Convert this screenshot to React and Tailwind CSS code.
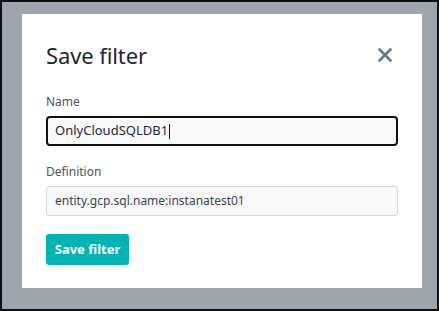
import React from "react";

export default function App() {
  return (
    <div
      className="w-[439px] h-[311px] bg-[#0f0f0f] p-[2px]"
      style={{ fontFamily: '"Noto Sans", "Open Sans", sans-serif' }}
    >
      <div className="w-full h-full bg-[#9ea5ad] pt-[12px] pl-[20px]">
        <div className="w-[400px] h-[274px] bg-white pt-[29px] px-[24px]">
          {/* Header */}
          <div className="flex items-center justify-between h-[24px]">
            <h2 className="text-[22px] leading-none text-[#1c2536] tracking-[-0.1px]">
              Save filter
            </h2>
            <button className="mr-[6px] text-[#687786]">
              <svg width="14" height="14" viewBox="0 0 14 14">
                <path
                  d="M1.5 1.5 L12.5 12.5 M12.5 1.5 L1.5 12.5"
                  stroke="currentColor"
                  strokeWidth="2.6"
                  strokeLinecap="round"
                />
              </svg>
            </button>
          </div>

          {/* Name */}
          <label className="block mt-[29px] text-[12px] leading-none text-[#4a5563]">
            Name
          </label>
          <div className="mt-[8px] h-[30px] w-[352px] rounded-[4px] border-2 border-[#111] bg-[#f8f9fb] flex items-center px-[7px] text-[13px] text-[#1f2937]">
            OnlyCloudSQLDB1
            <span className="inline-block w-px h-[15px] bg-[#111] ml-px" />
          </div>

          {/* Definition */}
          <label className="block mt-[20px] text-[12px] leading-none text-[#4a5563]">
            Definition
          </label>
          <div className="mt-[8px] h-[30px] w-[352px] rounded-[3px] border border-[#d5d9de] bg-[#f8f9fb] flex items-center px-[8px] text-[12px] text-[#3a4452]">
            entity.gcp.sql.name:instanatest01
          </div>

          <button className="mt-[18px] h-[31px] w-[83px] rounded-[3px] bg-[#00b4b3] text-white text-[13px] font-bold">
            Save filter
          </button>
        </div>
      </div>
    </div>
  );
}
